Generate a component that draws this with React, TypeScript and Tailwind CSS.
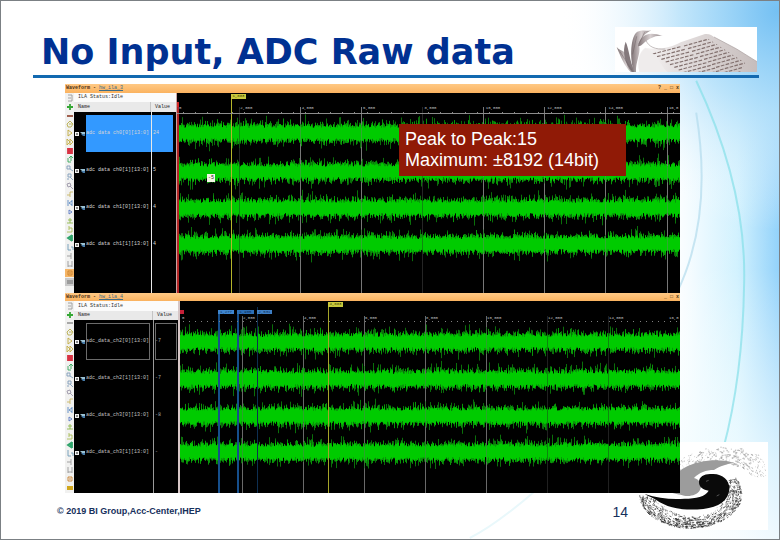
import React from 'react';

type Signal = { name: string; value: string };

type Marker = { x: number; color: string; width: number };

// small seeded generator, so that the noise is the same on every render
const createRandom = (seed: number) => {
  let s = seed;
  return () => {
    s = (s * 1664525 + 1013904223) % 4294967296;
    return s / 4294967296;
  };
};

const buildNoise = (seed: number, center: number, width: number) => {
  const rnd = createRandom(seed);
  let solid = '';
  let mid = '';
  let dim = '';
  for (let x = 0; x < width; x++) {
    const up = 5 + rnd() * 4;
    const down = 5 + rnd() * 4;
    solid += `M${x + 0.5} ${(center - up).toFixed(1)}V${(center + down).toFixed(1)}`;
    mid += `M${x + 0.5} ${(center - up - rnd() * rnd() * 6).toFixed(1)}V${(center + down + rnd() * rnd() * 6).toFixed(1)}`;
    if (rnd() > 0.5) {
      dim += `M${x + 0.5} ${(center - up - rnd() * rnd() * 11).toFixed(1)}V${(center + down + rnd() * rnd() * 11).toFixed(1)}`;
    }
  }
  return { solid, mid, dim };
};

const TOP_SIGNALS: Signal[] = [
  { name: 'adc data ch0[0][13:0]', value: '24' },
  { name: 'adc data ch0[1][13:0]', value: '5' },
  { name: 'adc data ch1[0][13:0]', value: '4' },
  { name: 'adc data ch1[1][13:0]', value: '4' }
];

const BOTTOM_SIGNALS: Signal[] = [
  { name: 'adc_data_ch2[0][13:0]', value: '-7' },
  { name: 'adc_data_ch2[1][13:0]', value: '-7' },
  { name: 'adc_data_ch3[0][13:0]', value: '-8' },
  { name: 'adc_data_ch3[1][13:0]', value: '-' }
];

const TICKS = ['0', '2,000', '4,000', '6,000', '8,000', '10,000', '12,000', '14,000'];

const TOOLS = [
  { label: 'Settings', color: '#9a9a9a', d: 'M2 1H6V7H2M2 4H5' },
  { label: 'Add', color: '#35a835', d: 'M4 1V7M1 4H7', heavy: true },
  { label: 'Remove', color: '#98503c', d: 'M1 4H7', heavy: true },
  { label: 'Trigger', color: '#b7ad4a', d: 'M4 1L7 4L5 7H2L1 4ZM3 4H6' },
  { label: 'Run', color: '#c2ac3f', d: 'M2 1V7L6 4Z' },
  { label: 'Run immediate', color: '#c2ac3f', d: 'M1 1V7L4 4ZM4 1V7L7 4Z' },
  { label: 'Stop', color: '#d93344', d: 'M2 2H6V6H2ZM2 4H6', heavy: true },
  { label: 'Export', color: '#35a85a', d: 'M2 3V7H5M5 6V1M3 3L5 1L7 3' },
  { label: 'Zoom in', color: '#7f9cba', d: 'M1 2H4V5H1ZM4 5L7 7' },
  { label: 'Zoom out', color: '#7f9cba', d: 'M2 1H5V4H2ZM4 4L7 7M1 6H3' },
  { label: 'Zoom fit', color: '#9b95a8', d: 'M1 2L4 1L5 4L2 5ZM4 4L7 7' },
  { label: 'Go to cursor', color: '#c8b662', d: 'M1 5H4V2H7M4 5V7' },
  { label: 'Go to start', color: '#5c8bc4', d: 'M2 1V7M6 1V7M6 2L3 4L6 6' },
  { label: 'Go to end', color: '#5c7cc4', d: 'M3 2V6L6 4Z' },
  { label: 'Previous edge', color: '#8fb84a', d: 'M1 6H7M2 3H6M4 1V6' },
  { label: 'Next edge', color: '#a9bd55', d: 'M1 7H6V3H3M3 1V5' },
  { label: 'Add marker', color: '#2fa46b', d: 'M2 4L5 2V6ZM6 1V7', heavy: true },
  { label: 'Previous marker', color: '#6d9bb8', d: 'M2 1V7H5M5 4H7V7' },
  { label: 'Next marker', color: '#999999', d: 'M1 4H5V1M5 4V7' },
  { label: 'Swap', color: '#999999', d: 'M2 1V7M6 1V7M2 6H6' },
  { label: 'Float', color: '#c9822c', d: 'M2 2H6V6H2ZM3 4H5' },
  { label: 'Legend', color: '#9c9c9c', d: 'M1 3H7M1 5H7', heavy: true }
];

const ToolBar: React.FC<{ active?: boolean }> = ({ active }) => (
  <div className={`flex w-[9px] shrink-0 flex-col justify-between bg-[#f1f1f0] pt-px ${active ? 'pb-[7px]' : 'pb-px'}`}>
    {TOOLS.map((tool, idx) => (
      <button
        key={tool.label}
        type="button"
        aria-label={tool.label}
        className={`flex h-2 w-full items-center justify-center ${active && idx === 20 ? 'bg-[#f5b566]' : ''} ${active && idx === 21 ? 'bg-[#c9c9c9]' : ''}`}
      >
        <svg viewBox="0 0 8 8" className="size-2" fill="none" stroke={!active && idx === 21 ? '#d1a71d' : !active && idx === 2 ? '#a0a0a0' : tool.color} strokeWidth={tool.heavy ? 1.8 : 0.9}>
          <path d={tool.d} />
        </svg>
      </button>
    ))}
  </div>
);

const SignalIcon: React.FC = () => (
  <svg viewBox="0 0 12 6" className="h-[6px] w-3 shrink-0">
    <rect x="1" y="1" width="4" height="4" fill="#f2f2f2" />
    <path d="M2 3H4M3 2V4" stroke="#333333" strokeWidth="0.7" />
    <path d="M6 1H11V3H8Z" fill="#9bc2d4" />
    <path d="M7 3H11V5H9Z" fill="#477ba8" />
  </svg>
);

const TitleBar: React.FC<{ name: string; controls: string; className: string }> = ({ name, controls, className }) => (
  <div className={`flex items-center bg-linear-to-b from-[#ffc984] to-[#fab25f] px-px text-[5px] leading-none font-bold text-[#4a2f12] ${className}`}>
    <span className="whitespace-pre">Waveform - </span>
    <a href="#waveform" className="font-normal text-[#3d6b86] underline">{name}</a>
    <span className="ml-auto whitespace-pre">{controls}</span>
  </div>
);

const Plot: React.FC<{
  centers: number[];
  width: number;
  height: number;
  seed: number;
  grid: { x: number; color: string }[];
  gridTop: number;
  markers: Marker[];
}> = ({ centers, width, height, seed, grid, gridTop, markers }) => (
  <svg viewBox={`0 0 ${width} ${height}`} preserveAspectRatio="none" className="block h-full w-full">
    {grid.map((line) => (
      <path key={line.x} d={`M${line.x}.5 ${gridTop}V${height}`} stroke={line.color} />
    ))}
    {centers.map((center, idx) => {
      const noise = buildNoise(seed + idx * 97, center, width);
      return (
        <g key={center} fill="none">
          <path d={noise.dim} stroke="#0a6f0a" />
          <path d={noise.mid} stroke="#089608" />
          <path d={noise.solid} stroke="#00cb00" />
        </g>
      );
    })}
    {grid.map((line) => (
      <path key={line.x} d={`M${line.x}.5 ${gridTop}V${height}`} stroke={line.color} strokeOpacity="0.4" />
    ))}
    {markers.map((marker) => (
      <path
        key={marker.x}
        d={marker.width === 2 ? `M${marker.x + 1} ${gridTop - 5}V${height}` : `M${marker.x}.5 ${gridTop - 9}V${height}`}
        stroke={marker.color}
        strokeWidth={marker.width}
      />
    ))}
  </svg>
);

const Ruler: React.FC<{ className: string }> = ({ className }) => (
  <div className={`absolute inset-x-0 flex text-[4px] leading-[5px] text-[#c4c4c4] ${className}`}>
    {TICKS.map((tick) => (
      <span key={tick} className="w-[12.2%] shrink-0 pl-[2px]">{tick}</span>
    ))}
    <span className="pl-px">16,0</span>
  </div>
);

const TOP_GRID = [62, 123, 184, 245, 306, 367, 428, 490].map((x) => ({ x, color: x === 62 || x === 245 ? '#262626' : '#777777' }));
const BOTTOM_GRID = [62, 123, 184, 245, 306, 367, 428].map((x) => ({ x, color: x > 320 ? '#202020' : '#6a6a6a' }));

const TopWindow: React.FC = () => (
  <section className="flex h-[209px] flex-col">
    <TitleBar name="hw_ila_3" controls="? _ □ x" className="h-[9px] shrink-0" />
    <div className="flex min-h-0 flex-1">
      <ToolBar active />
      <div className="flex w-[103px] shrink-0 flex-col border-r border-[#c9a3a3] text-[5px] leading-none">
        <div className="flex h-[9px] items-center bg-[#fbfbfb] px-1 text-[#333333]">ILA Status:Idle</div>
        <div className="flex h-[10px] bg-[#e9e9e9] text-[#222222]">
          <span className="flex w-[77px] items-center border-r border-[#c4c4c4] px-1">Name</span>
          <span className="flex items-center px-1">Value</span>
        </div>
        <div className="flex min-h-0 flex-1">
          <div className="w-[78px] border-r border-[#e8e8e8] pt-[3px]">
            {TOP_SIGNALS.map((signal, idx) => (
              <div key={signal.name} className="flex h-[37px] items-center text-[#d5d5d5]">
                <SignalIcon />
                <span className={`flex h-full flex-1 items-center whitespace-pre ${idx === 0 ? 'bg-[#3399ff]' : ''}`}>{signal.name}</span>
              </div>
            ))}
          </div>
          <div className="flex-1 pt-[3px] pr-[3px]">
            {TOP_SIGNALS.map((signal, idx) => (
              <div key={signal.name} className={`flex h-[37px] items-center pl-px text-[#d5d5d5] ${idx === 0 ? 'bg-[#3399ff]' : ''}`}>{signal.value}</div>
            ))}
          </div>
        </div>
      </div>
      <div className="relative min-w-0 flex-1">
        <Plot
          width={503}
          height={200}
          seed={11}
          centers={[40, 79, 115, 151]}
          grid={TOP_GRID}
          gridTop={14}
          markers={[{ x: 0, color: '#b32424', width: 2 }, { x: 54, color: '#b5b52a', width: 1 }]}
        />
        <Ruler className="top-[13px]" />
        <div className="absolute inset-x-0 top-[20px] h-px bg-[#8c8c8c]"></div>
        <div className="absolute inset-x-0 top-[19px] flex h-px justify-around">
          {Array.from({ length: 41 }, (_, idx) => (
            <span key={idx} className="w-px bg-[#8a8a8a]"></span>
          ))}
        </div>
        <span className="absolute top-[9px] left-0 h-[5px] w-[2px] bg-[#d42626]"></span>
        <span className="absolute top-px left-[54px] w-[15px] bg-[#c8c83c] text-center text-[4px] leading-[5px] text-[#333300]">1,883</span>
        <span className="absolute top-[81px] left-[30px] w-2 bg-[#f4f6e6] text-center text-[5px] leading-[8px] text-[#222222]">-5</span>
      </div>
    </div>
  </section>
);

const BottomWindow: React.FC = () => (
  <section className="flex h-[200px] flex-col">
    <TitleBar name="hw_ila_4" controls="_ □ x" className="h-[8px] shrink-0" />
    <div className="flex min-h-0 flex-1">
      <ToolBar />
      <div className="flex w-[106px] shrink-0 flex-col border-r-2 border-[#d6c6c6] text-[5px] leading-none">
        <div className="flex h-[10px] items-center bg-[#fbfbfb] px-1 text-[#333333]">ILA Status:Idle</div>
        <div className="flex h-[9px] bg-[#e9e9e9] text-[#222222]">
          <span className="flex w-[79px] items-center border-r border-[#c4c4c4] px-1">Name</span>
          <span className="flex items-center px-1">Value</span>
        </div>
        <div className="flex min-h-0 flex-1">
          <div className="w-[80px] border-r border-[#9a9a9a] pt-[3px] pr-[3px]">
            {BOTTOM_SIGNALS.map((signal, idx) => (
              <div key={signal.name} className="flex h-[37px] items-center text-[#c2c2c2]">
                <SignalIcon />
                <span className={`flex h-full flex-1 items-center whitespace-pre ${idx === 0 ? 'outline -outline-offset-1 outline-[#6b6b6b]' : ''}`}>{signal.name}</span>
              </div>
            ))}
          </div>
          <div className="flex-1 pt-[3px] pr-px pl-px">
            {BOTTOM_SIGNALS.map((signal, idx) => (
              <div key={signal.name} className={`flex h-[37px] items-center text-[#a8a8a8] ${idx === 0 ? 'outline -outline-offset-1 outline-[#6b6b6b]' : ''}`}>{signal.value}</div>
            ))}
          </div>
        </div>
      </div>
      <div className="relative min-w-0 flex-1">
        <Plot
          width={500}
          height={192}
          seed={523}
          centers={[41, 78, 115, 151]}
          grid={BOTTOM_GRID}
          gridTop={15}
          markers={[
            { x: 38, color: '#164f8c', width: 2 },
            { x: 57, color: '#164f8c', width: 2 },
            { x: 77, color: '#0e2f52', width: 1 },
            { x: 148, color: '#a5a528', width: 1 }
          ]}
        />
        <Ruler className="top-[15px]" />
        <div className="absolute inset-x-0 top-[20px] flex h-px justify-around">
          {Array.from({ length: 82 }, (_, idx) => (
            <span key={idx} className="w-px bg-[#7f7f7f]"></span>
          ))}
        </div>
        <span className="absolute top-[9px] left-0 size-1 bg-[#c62038]"></span>
        <span className="absolute top-[9px] left-[38px] w-[16px] bg-[#3f86cf] text-center text-[4px] leading-[4px] text-[#0c2c55]">1,277</span>
        <span className="absolute top-[9px] left-[57px] w-[17px] bg-[#2c6fb5] text-center text-[4px] leading-[4px] text-[#0c2c55]">1,905</span>
        <span className="absolute top-[9px] left-[77px] w-[15px] bg-[#3f7fc4] text-center text-[4px] leading-[4px] text-[#0c2c55]">2,531</span>
        <span className="absolute top-px left-[148px] w-[15px] bg-[#c8c83c] text-center text-[4px] leading-[5px] text-[#333300]">4,883</span>
      </div>
    </div>
  </section>
);

const BookPicture: React.FC = () => {
  const rows = Array.from({ length: 12 }, (_, idx) => idx);
  return (
    <svg viewBox="75 78 426 135" preserveAspectRatio="none" className="h-[45px] w-[142px] shrink-0 bg-white">
      <defs>
        <linearGradient id="page" x1="0" x2="1">
          <stop offset="0" stopColor="#f8f6f6" />
          <stop offset="0.3" stopColor="#e6e1e1" />
          <stop offset="1" stopColor="#c6bdbc" />
        </linearGradient>
        <linearGradient id="leaf" x1="0" x2="1">
          <stop offset="0" stopColor="#7f7375" />
          <stop offset="0.5" stopColor="#d8d0d1" />
          <stop offset="1" stopColor="#8d8284" />
        </linearGradient>
        <clipPath id="sheet"><path d="M186 156L352 112L466 186L450 213H262Z" /></clipPath>
      </defs>
      <path d="M165 140C200 148 240 142 272 124L345 99C360 98 366 103 372 108L440 144L501 182V213H150C138 180 148 152 165 140Z" fill="url(#page)" />
      <path d="M148 213C140 180 150 152 166 142C196 150 214 196 232 213Z" fill="#efecec" />
      <path d="M372 108L440 144L501 182" fill="none" stroke="#a79d9d" strokeWidth="2" />
      <g clipPath="url(#sheet)" stroke="#83716f" strokeWidth="3.5" strokeDasharray="11 4">
        {rows.map((row) => (
          <g key={row}>
            <path d={`M${188 + row * 13} ${159 + row * 8}l84 -22`} />
            <path d={`M${282 + row * 12} ${135 + row * 8}l78 -22`} />
          </g>
        ))}
      </g>
      <path d="M80 138C92 168 104 196 122 213H138C124 196 116 168 104 154C96 148 86 146 80 138Z" fill="url(#leaf)" />
      <path d="M107 122C96 150 104 190 126 213H134C118 178 118 146 107 122Z" fill="#84797c" />
      <path d="M132 213C118 170 122 104 142 92C160 84 176 92 184 88C164 98 150 112 148 136C152 160 136 184 138 213Z" fill="url(#leaf)" />
      <path d="M144 136C150 104 172 88 218 105C196 101 182 112 166 122C158 128 156 134 144 136Z" fill="url(#leaf)" />
      <path d="M168 118C176 138 196 146 226 144" fill="none" stroke="#a79e9f" strokeWidth="2" />
      <path d="M146 130L164 94M128 160L140 106M90 152L126 208" fill="none" stroke="#6e6265" strokeWidth="1.5" />
    </svg>
  );
};

const SwirlLogo: React.FC = () => {
  const rnd = createRandom(77);
  let dark = '';
  let light = '';
  // brush flecks below and to the right of the black comma
  for (let i = 0; i < 1100; i++) {
    const t = -0.5 + rnd() * 3.55;
    const r = 0.68 + Math.sqrt(rnd()) * 0.42;
    const x = 302 + Math.cos(t) * 140 * r;
    const y = 222 + Math.sin(t) * 94 * r;
    const len = 1 + rnd() * rnd() * 7;
    dark += `M${x.toFixed(1)} ${y.toFixed(1)}l${(-Math.sin(t) * len * 1.3).toFixed(1)} ${(Math.cos(t) * len).toFixed(1)}`;
  }
  // lighter flecks along the upper arm
  for (let i = 0; i < 420; i++) {
    const t = 3.5 + rnd() * 2.5;
    const r = 0.6 + rnd() * 0.55;
    const x = 400 + Math.cos(t) * 150 * r;
    const y = 190 + Math.sin(t) * 95 * r;
    const len = 1 + rnd() * 6;
    if (x < 528 && y < 175) light += `M${x.toFixed(1)} ${y.toFixed(1)}l${(-Math.sin(t) * len).toFixed(1)} ${(Math.cos(t) * len * 0.5).toFixed(1)}`;
  }
  return (
    <svg viewBox="135 66 399 264" preserveAspectRatio="none" className="absolute right-[11px] bottom-[9px] h-[88px] w-[133px] bg-white">
      <path d={light} stroke="#8f8f8f" strokeWidth="1.8" fill="none" />
      <path d={dark} stroke="#2a2a2a" strokeWidth="2" fill="none" />
      {/* clear gap between the two commas */}
      <path d="M232 206C240 170 290 150 345 150C400 150 420 190 410 215C390 250 300 262 196 232Z" fill="#ffffff" />
      <path d="M232 206C242 168 276 138 330 126C366 118 402 120 430 128C408 134 392 136 372 150C348 150 328 158 312 174C330 178 338 196 330 210C320 228 292 232 272 224C256 222 236 218 232 206Z" fill="#9c9c9c" />
      <path d="M327 186C327 168 346 160 366 162C398 160 420 182 418 208C416 242 386 262 340 267C286 272 236 268 196 238C186 232 174 228 164 222C204 234 244 240 284 236C318 236 346 230 356 212C340 210 327 202 327 186Z" fill="#0a0a0a" />
      <path d="M348 184l8 -3M380 228l8 -4" stroke="#777777" strokeWidth="2" />
    </svg>
  );
};

const Backdrop: React.FC = () => (
  <svg viewBox="0 0 780 540" preserveAspectRatio="none" className="absolute inset-0 h-full w-full" fill="none">
    <defs>
      <linearGradient id="band" x1="660" x2="780" y1="0" y2="0" gradientUnits="userSpaceOnUse">
        <stop offset="0" stopColor="#ffffff" stopOpacity="0" />
        <stop offset="0.35" stopColor="#eaf9ff" />
        <stop offset="0.65" stopColor="#d0f1fe" />
        <stop offset="1" stopColor="#8ed0fa" />
      </linearGradient>
      <linearGradient id="fade" x1="0" x2="0" y1="0" y2="1">
        <stop offset="0" stopColor="#ffffff" stopOpacity="0" />
        <stop offset="0.5" stopColor="#ffffff" stopOpacity="0.05" />
        <stop offset="0.85" stopColor="#f4fdff" stopOpacity="0.75" />
        <stop offset="1" stopColor="#ffffff" stopOpacity="0.85" />
      </linearGradient>
      <radialGradient id="corner" cx="780" cy="10" r="220" gradientUnits="userSpaceOnUse">
        <stop offset="0" stopColor="#74c0f3" />
        <stop offset="0.45" stopColor="#b4e0fa" stopOpacity="0.8" />
        <stop offset="1" stopColor="#ffffff" stopOpacity="0" />
      </radialGradient>
    </defs>
    <rect x="640" width="140" height="540" fill="url(#band)" />
    <rect x="640" width="140" height="540" fill="url(#fade)" />
    <rect x="540" width="240" height="240" fill="url(#corner)" />
    <path d="M697 80C730 150 747 220 745 285C744 350 736 405 724 450" stroke="#86dfe8" strokeOpacity="0.7" strokeWidth="2" />
    <path d="M697 112C708 180 703 240 678 292" stroke="#b4dcec" strokeOpacity="0.7" strokeWidth="2" />
    <path d="M534 493C512 512 492 528 470 539" stroke="#e9f8fb" strokeWidth="2" />
  </svg>
);

const App: React.FC = () => {
  return (
    <div className="relative flex min-h-screen flex-col overflow-hidden border border-[#7b8084] bg-white font-['Liberation_Sans',Arial,sans-serif]">
      <Backdrop />
      <SwirlLogo />

      {/* title and rule */}
      <header className="relative mr-5 ml-8 flex h-[77px] items-end justify-between border-b-3 border-[#1269b0] pr-[2px] pb-[3px] pl-2">
        <h1 className="font-['DejaVu_Sans','Verdana',sans-serif] text-[35px] leading-10 font-bold whitespace-nowrap text-[#003192]">No Input, ADC Raw data</h1>
        <BookPicture />
      </header>

      {/* captured waveforms */}
      <main className="relative mt-[6px] mr-[99px] ml-16 bg-black font-['Liberation_Mono',monospace]">
        <TopWindow />
        <BottomWindow />
        <div className="absolute top-10 right-[54px] w-[227px] bg-[#901a06] px-[6px] py-[5px] font-['Liberation_Sans',Arial,sans-serif] text-[18px] leading-[21px] whitespace-nowrap text-white">
          <p>Peak to Peak:15</p>
          <p>Maximum: ±8192 (14bit)</p>
        </div>
      </main>

      <footer className="relative flex flex-1 items-center justify-between pr-[151px] pb-2 pl-14 text-[#16305c]">
        <span className="text-[9px] font-bold">© 2019 BI Group,Acc-Center,IHEP</span>
        <span className="text-[14px]">14</span>
      </footer>
    </div>
  );
};

export default App;
